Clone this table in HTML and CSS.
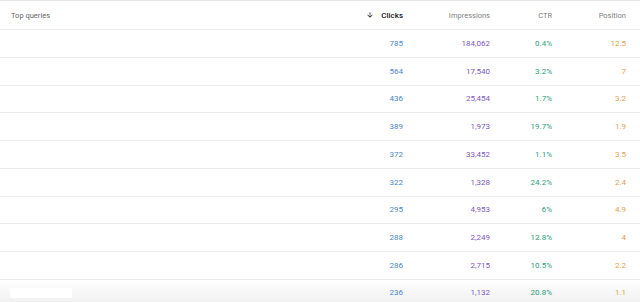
FILE: index.html
```html
<!DOCTYPE html>
<html>
<head>
<meta charset="utf-8">
<link rel="stylesheet" href="styles.css">
</head>
<body>
<div class="table">
  <div class="row head">
    <div class="c q">Top queries</div>
    <div class="c clicks"><svg class="arrow" width="8" height="8" viewBox="0 0 24 24"><path d="M20 12l-1.41-1.41L13 16.17V4h-2v12.17l-5.58-5.59L4 12l8 8 8-8z" fill="#202124"/></svg>Clicks</div>
    <div class="c impr">Impressions</div>
    <div class="c ctr">CTR</div>
    <div class="c pos">Position</div>
  </div>
  <div class="row"><div class="c q"></div><div class="c clicks">785</div><div class="c impr">184,062</div><div class="c ctr">0.4%</div><div class="c pos">12.5</div></div>
  <div class="row"><div class="c q"></div><div class="c clicks">564</div><div class="c impr">17,540</div><div class="c ctr">3.2%</div><div class="c pos">7</div></div>
  <div class="row"><div class="c q"></div><div class="c clicks">436</div><div class="c impr">25,454</div><div class="c ctr">1.7%</div><div class="c pos">3.2</div></div>
  <div class="row"><div class="c q"></div><div class="c clicks">389</div><div class="c impr">1,973</div><div class="c ctr">19.7%</div><div class="c pos">1.9</div></div>
  <div class="row"><div class="c q"></div><div class="c clicks">372</div><div class="c impr">33,452</div><div class="c ctr">1.1%</div><div class="c pos">3.5</div></div>
  <div class="row"><div class="c q"></div><div class="c clicks">322</div><div class="c impr">1,328</div><div class="c ctr">24.2%</div><div class="c pos">2.4</div></div>
  <div class="row"><div class="c q"></div><div class="c clicks">295</div><div class="c impr">4,953</div><div class="c ctr">6%</div><div class="c pos">4.9</div></div>
  <div class="row"><div class="c q"></div><div class="c clicks">288</div><div class="c impr">2,249</div><div class="c ctr">12.8%</div><div class="c pos">4</div></div>
  <div class="row"><div class="c q"></div><div class="c clicks">286</div><div class="c impr">2,715</div><div class="c ctr">10.5%</div><div class="c pos">2.2</div></div>
  <div class="row last"><div class="c q"><span class="blank"></span></div><div class="c clicks">236</div><div class="c impr">1,132</div><div class="c ctr">20.8%</div><div class="c pos">1.1</div></div>
</div>
</body>
</html>
```
FILE: styles.css
```css
html, body {
  margin: 0;
  padding: 0;
  background: #fff;
}
body {
  width: 640px;
  height: 302px;
  overflow: hidden;
  font-family: Roboto, "Liberation Sans", sans-serif;
  font-size: 8px;
}
.table {
  border-top: 1px solid #e6e6e6;
}
.row {
  display: grid;
  grid-template-columns: 1fr 70px 87px 62px 74px 14px;
  align-items: center;
  height: 26.75px;
  border-bottom: 1px solid #ececec;
}
.row.head {
  height: 28px;
}
.row.last {
  border-bottom: none;
  height: 22px;
  align-items: start;
  padding-top: 8px;
  box-sizing: border-box;
  background: linear-gradient(to bottom, #ffffff, #f1f1f1);
}
.c {
  text-align: right;
  white-space: nowrap;
}
.c.q {
  text-align: left;
  padding-left: 11px;
}
.head .c {
  color: #808080;
  font-size: 7.5px;
}
.head .c.q {
  color: #666666;
}
.head .c.clicks {
  color: #202124;
  font-size: 8px;
  font-weight: 500;
}
.arrow {
  display: inline-block;
  vertical-align: -1px;
  margin-right: 7px;
}
.clicks { color: #4a86c8; }
.impr { color: #7e57c2; }
.ctr { color: #2e9d7c; }
.pos { color: #e0a050; }
.blank {
  display: inline-block;
  width: 62px;
  height: 10px;
  background: #fff;
  margin-left: -1px;
}
```
